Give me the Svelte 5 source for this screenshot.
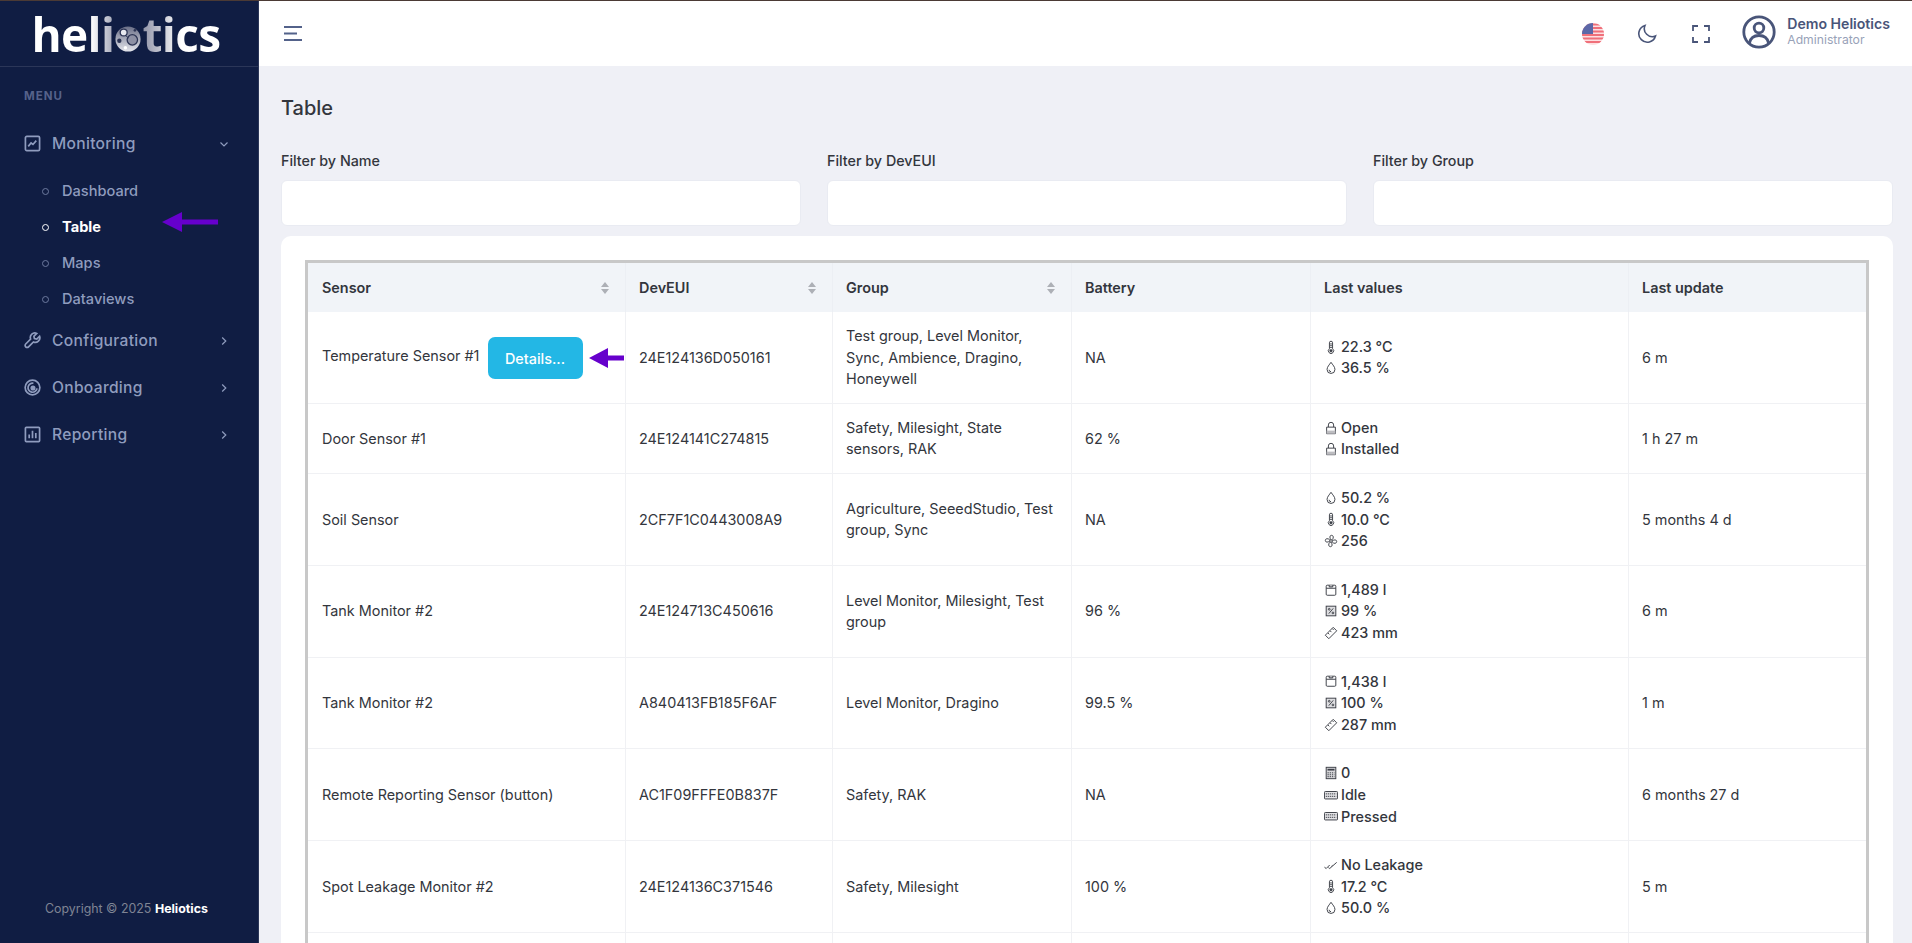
<script>
  const rows = [
    { name: 'Temperature Sensor #1', details: true, eui: '24E124136D050161', group: 'Test group, Level Monitor, Sync, Ambience, Dragino, Honeywell', battery: 'NA', values: [['therm', '22.3 °C'], ['drop', '36.5 %']], update: '6 m' },
    { name: 'Door Sensor #1', eui: '24E124141C274815', group: 'Safety, Milesight, State sensors, RAK', battery: '62 %', values: [['lock', 'Open'], ['lock', 'Installed']], update: '1 h 27 m' },
    { name: 'Soil Sensor', eui: '2CF7F1C0443008A9', group: 'Agriculture, SeeedStudio, Test group, Sync', battery: 'NA', values: [['drop', '50.2 %'], ['therm', '10.0 °C'], ['fan', '256']], update: '5 months 4 d' },
    { name: 'Tank Monitor #2', eui: '24E124713C450616', group: 'Level Monitor, Milesight, Test group', battery: '96 %', values: [['tank', '1,489 l'], ['pct', '99 %'], ['ruler', '423 mm']], update: '6 m' },
    { name: 'Tank Monitor #2', eui: 'A840413FB185F6AF', group: 'Level Monitor, Dragino', battery: '99.5 %', values: [['tank', '1,438 l'], ['pct', '100 %'], ['ruler', '287 mm']], update: '1 m' },
    { name: 'Remote Reporting Sensor (button)', eui: 'AC1F09FFFE0B837F', group: 'Safety, RAK', battery: 'NA', values: [['calc', '0'], ['keys', 'Idle'], ['keys', 'Pressed']], update: '6 months 27 d' },
    { name: 'Spot Leakage Monitor #2', eui: '24E124136C371546', group: 'Safety, Milesight', battery: '100 %', values: [['check', 'No Leakage'], ['therm', '17.2 °C'], ['drop', '50.0 %']], update: '5 m' }
  ];
  const subs = ['Dashboard', 'Table', 'Maps', 'Dataviews'];
</script>

{#snippet vicon(n)}
  <svg class="vi" viewBox="0 0 16 16" fill="none" stroke="#3c3f47" stroke-width="1.1">
    {#if n === 'therm'}
      <path d="M6.200 10V3.200a1.800 1.800 0 0 1 3.600 0V10a3 3 0 1 1-3.600 0z" /><circle cx="8" cy="12.300" r="1.300" fill="#3c3f47" /><path d="M7 4.500h2M7 6.500h2M7 8.500h2" />
    {:else if n === 'drop'}
      <path d="M8 1.500c2 3 4.500 5.200 4.500 8.200a4.500 4.500 0 0 1-9 0C3.500 6.700 6 4.500 8 1.500z" /><path d="M5.800 10a2.200 2.200 0 0 0 2.200 2.200" />
    {:else if n === 'lock'}
      <path d="M5 7V4.500a3 3 0 0 1 6 0V7" /><path d="M3 7h10v7.500H3z" fill="#fff" /><rect x="3" y="11" width="10" height="3.500" fill="#bdbdc1" stroke="none" />
    {:else if n === 'fan'}
      <circle cx="8" cy="8" r="1.500" /><path d="M8 6.500C6 4.500 6.500 1.500 8.500 1.500c2.500 0 2.800 2.800 1 5M9.500 8c2-2 5-1.500 5 .5 0 2.500-2.800 2.800-5 1M8 9.500c2 2 1.500 5-.5 5-2.500 0-2.800-2.800-1-5M6.500 8c-2 2-5 1.500-5-.5C1.500 5 4.300 4.700 6.500 6.500" />
    {:else if n === 'tank'}
      <rect x="2.500" y="2.500" width="11" height="11.500" rx="1.200" /><path d="M2.500 6h11" /><path d="M6 2.500v2h4v-2" fill="#bdbdc1" />
    {:else if n === 'pct'}
      <rect x="2.500" y="2.500" width="11" height="11" fill="#dedee1" /><path d="M10.500 5l-5 6" /><circle cx="6" cy="6" r="1" /><circle cx="10.200" cy="10.200" r="1" />
    {:else if n === 'ruler'}
      <path d="M1.500 10.500l9-9 4 4-9 9zM4.500 8l1.500 1.500M7 5.500L8.500 7M9.500 3l1.500 1.500" />
    {:else if n === 'calc'}
      <rect x="2.500" y="1.500" width="11" height="13" fill="#d8d8db" /><path d="M4 4.200h8" stroke-width="2" /><path d="M4 7.800h8M4 10h8M4 12.200h8" stroke-dasharray="1.500 1" />
    {:else if n === 'keys'}
      <rect x="0.500" y="4" width="15" height="8.500" rx="1" fill="#e4e4e7" /><path d="M2 6.700h12M2 9.500h12" stroke-dasharray="1.500 .8" />
    {:else}
      <path d="M.5 10.500l2 1.500 4-4M5 11l1.500 1 8-7M8.500 9.500l1.200-1" />
    {/if}
  </svg>
{/snippet}

{#snippet sort()}
  <svg class="sort" viewBox="0 0 8 12" fill="#adb0b6"><path d="M4 0l4 5H0zM4 12L0 7h8z" /></svg>
{/snippet}

{#snippet chevron(down)}
  <svg class="chev" viewBox="0 0 10 10" fill="none" stroke="#8f9cbe" stroke-width="1.200">
    {#if down}<path d="M1.500 3.500L5 7l3.500-3.500" />{:else}<path d="M3.200 1.500L6.800 5 3.200 8.500" />{/if}
  </svg>
{/snippet}

<div class="app">
  <aside class="side">
    <div class="brand">
      <span class="logo"><span class="l1">heli</span><svg class="planet" viewBox="0 0 30 30">
        <defs><linearGradient id="pg" x1="0" y1="0" x2="0" y2="1"><stop offset="0" stop-color="#6b7088" /><stop offset="1" stop-color="#e4e5ec" /></linearGradient></defs>
        <circle cx="15" cy="15" r="14.500" fill="url(#pg)" /><circle cx="20" cy="16" r="6" fill="#8d90a4" stroke="#2c3454" stroke-width="1.500" /><circle cx="10" cy="7.500" r="4" fill="#e8e9ef" stroke="#2c3454" stroke-width="1.500" /><circle cx="5" cy="17" r="2.500" fill="#2c3454" /><circle cx="12" cy="25" r="2" fill="#fff" /><circle cx="23" cy="5" r="1.500" fill="#2c3454" /><path d="M12 11l4 3" stroke="#2c3454" />
      </svg><span class="l2">tics</span></span>
    </div>
    <nav class="nav">
      <div class="cap">MENU</div>
      <div class="item first">
        <svg class="ni" viewBox="0 0 18 18" fill="none" stroke="#8f9cbe" stroke-width="1.800"><rect x="1.500" y="1.500" width="15" height="15" rx="1.500" /><path d="M4.500 12l3-3.500 2 1.500 3.500-4" /></svg>
        <span>Monitoring</span>{@render chevron(true)}
      </div>
      <ul class="subs">
        {#each subs as s}
          <li class:on={s === 'Table'}><i></i>{s}</li>
        {/each}
      </ul>
      <div class="item">
        <svg class="ni" viewBox="0 0 18 18" fill="none" stroke="#8f9cbe" stroke-width="1.800"><path d="M16.500 4.500l-3 3-2.500-.5-.5-2.500 3-3A4.800 4.800 0 0 0 7 7.500L1.800 12.700a2.100 2.100 0 0 0 3 3L10 10.500a4.800 4.800 0 0 0 6.500-6z" /></svg>
        <span>Configuration</span>{@render chevron(false)}
      </div>
      <div class="item">
        <svg class="ni" viewBox="0 0 18 18" fill="none" stroke="#8f9cbe" stroke-width="1.800"><circle cx="9" cy="9" r="7.800" /><path d="M10 4.500a4.800 4.800 0 1 0 3.800 5.500" /><circle cx="9.500" cy="9.500" r="1.800" fill="#8f9cbe" /></svg>
        <span>Onboarding</span>{@render chevron(false)}
      </div>
      <div class="item">
        <svg class="ni" viewBox="0 0 18 18" fill="none" stroke="#8f9cbe" stroke-width="1.800"><rect x="1.500" y="1.500" width="15" height="15" rx="1" /><path d="M5.500 13V9M9 13V5M12.500 13V7.500" /></svg>
        <span>Reporting</span>{@render chevron(false)}
      </div>
    </nav>
    <div class="copy">Copyright © 2025 <b>Heliotics</b></div>
    <svg class="arrow a1" viewBox="0 0 56 20" fill="#6600cc"><path d="M0 10L20 0v7.500h36v5H20V20z" /></svg>
  </aside>

  <div class="main">
    <header class="top">
      <svg class="burger" viewBox="0 0 18 15" fill="none" stroke="#53628a" stroke-width="2"><path d="M0 1h18M0 7.500h13M0 14h18" /></svg>
      <div class="tools">
        <svg class="flag" viewBox="0 0 22 22">
          <defs><clipPath id="fc"><circle cx="11" cy="11" r="11" /></clipPath></defs>
          <g clip-path="url(#fc)">
            <rect width="22" height="22" fill="#fde0e2" />
            <path d="M0 1.500h22M0 5h22M0 8.500h22M0 12h22M0 15.500h22M0 19h22" stroke="#f0707a" stroke-width="1.800" />
            <rect width="11" height="11" fill="#5c68a8" />
          </g>
        </svg>
        <svg class="moon" viewBox="0 0 20 20" fill="none" stroke="#495579" stroke-width="1.600"><path d="M8 1.500a8.500 8.500 0 1 0 10.500 10.500A8 8 0 0 1 8 1.500z" /></svg>
        <svg class="full" viewBox="0 0 18 18" fill="none" stroke="#495579" stroke-width="1.800"><path d="M1 6V1h5M12 1h5v5M17 12v5h-5M6 17H1v-5" /></svg>
        <div class="user">
          <svg class="avatar" viewBox="0 0 34 34" fill="none" stroke="#495579" stroke-width="2.800"><circle cx="17" cy="17" r="15.200" /><circle cx="17" cy="13" r="4.800" /><path d="M7.500 28c1-5 5-7.500 9.500-7.500s8.500 2.500 9.500 7.500" /></svg>
          <div class="who"><strong>Demo Heliotics</strong><small>Administrator</small></div>
        </div>
      </div>
    </header>

    <main class="content">
      <h1>Table</h1>
      <div class="filters">
        <label>Filter by Name<input type="text" /></label>
        <label>Filter by DevEUI<input type="text" /></label>
        <label>Filter by Group<input type="text" /></label>
      </div>
      <section class="card">
        <table>
          <colgroup>
            <col class="c1" /><col class="c2" /><col class="c3" /><col class="c4" /><col class="c5" /><col />
          </colgroup>
          <thead>
            <tr>
              <th><div class="th">Sensor{@render sort()}</div></th>
              <th><div class="th">DevEUI{@render sort()}</div></th>
              <th><div class="th">Group{@render sort()}</div></th>
              <th>Battery</th>
              <th>Last values</th>
              <th>Last update</th>
            </tr>
          </thead>
          <tbody>
            {#each rows as r}
              <tr>
                <td>
                  {r.name}
                  {#if r.details}
                    <span class="det">
                      <button>Details...</button>
                      <svg class="arrow a2" viewBox="0 0 35 20" fill="#6600cc"><path d="M0 10L19 0v7.500h16v5H19V20z" /></svg>
                    </span>
                  {/if}
                </td>
                <td>{r.eui}</td>
                <td>{r.group}</td>
                <td>{r.battery}</td>
                <td>
                  {#each r.values as v}
                    <div class="val">{@render vicon(v[0])}<span>{v[1]}</span></div>
                  {/each}
                </td>
                <td>{r.update}</td>
              </tr>
            {/each}
            <tr class="blank"><td></td><td></td><td></td><td></td><td></td><td></td></tr>
          </tbody>
        </table>
      </section>
    </main>
  </div>
</div>

<style>
  :global(body) { margin: 0; background: #eff0f6; }
  .app {
    display: grid; grid-template-columns: 259px 1fr; grid-template-rows: minmax(0, 1fr); height: 943px; overflow: hidden;
    font-family: Inter, "Liberation Sans", sans-serif; color: #33363d; font-size: 14.4px;
    border-top: 1px solid #4b3a35; box-sizing: border-box;
  }
  .side {
    position: relative; background: #101d43; border-right: 1px solid #2b3658;
    display: flex; flex-direction: column; box-sizing: border-box; min-height: 0;
    color: #8f9cbe; overflow: hidden;
  }
  .brand { height: 65px; border-bottom: 1px solid #2b3658; display: flex; justify-content: center; align-items: center; flex: none; }
  .logo { display: flex; align-items: center; font: 700 46px/1 "Open Sans", sans-serif; color: #fff; letter-spacing: -.6px; margin-left: -6px; }
  .l1 { background: linear-gradient(90deg, #fff 72%, #a4a7b8 100%); -webkit-background-clip: text; background-clip: text; color: transparent; }
  .l2 { background: linear-gradient(90deg, #8e91a6 0%, #fff 50%); -webkit-background-clip: text; background-clip: text; color: transparent; }
  .planet { width: 26px; height: 26px; margin: 10px 1px 0 1px; }
  .nav { flex: 1; padding-top: 21px; }
  .cap { padding-left: 24px; font-size: 11.5px; font-weight: 700; letter-spacing: 1px; color: #56628a; line-height: 16px; margin-bottom: 16px; }
  .item { display: flex; align-items: center; height: 47px; padding-left: 24px; font-size: 15.6px; font-weight: 500; letter-spacing: .3px; }
  .item span { margin-left: 11px; flex: 1; }
  .ni { width: 17px; height: 17px; flex: none; }
  .chev { width: 10px; height: 10px; margin-right: 29px; flex: none; }
  .subs { list-style: none; margin: 0; padding: 6px 0 0 42px; }
  .subs li { height: 36px; display: flex; align-items: center; font-size: 14.6px; font-weight: 500; }
  .subs i { width: 5px; height: 5px; border: 1px solid #6d7a9f; border-radius: 50%; margin-right: 13px; box-sizing: content-box; }
  .subs li.on { color: #fff; font-weight: 700; }
  .subs li.on i { border-color: #fff; }
  .copy { padding: 0 0 25px 45px; font-size: 12.4px; color: #7f8494; line-height: 18px; flex: none; }
  .copy b { color: #fff; }
  .arrow { position: absolute; }
  .a1 { left: 162px; top: 211px; width: 56px; height: 20px; }
  .main { min-width: 0; min-height: 0; overflow: hidden; display: flex; flex-direction: column; }
  .top { height: 65px; background: #fff; display: flex; align-items: center; justify-content: space-between; padding: 0 22px 0 25px; flex: none; }
  .burger { width: 18px; height: 15px; }
  .tools { display: flex; align-items: center; }
  .flag { width: 22px; height: 22px; margin-right: 33px; }
  .moon { width: 20px; height: 20px; margin-right: 35px; }
  .full { width: 18px; height: 18px; margin-right: 32px; }
  .user { display: flex; align-items: center; gap: 11px; margin-bottom: 3px; }
  .avatar { width: 34px; height: 34px; margin-bottom: 1px; }
  .who { display: flex; flex-direction: column; line-height: 16px; }
  .who strong { font-size: 14.1px; font-weight: 600; color: #495579; }
  .who small { font-size: 12.2px; color: #98a2b8; }
  .content { padding: 0 19px 0 22px; }
  h1 { margin: 0; padding-top: 29px; font-size: 20px; font-weight: 500; line-height: 26px; color: #33363d; }
  .filters { display: grid; grid-template-columns: repeat(3, 1fr); gap: 26px; margin-top: 29px; }
  label { display: block; font-size: 14.3px; font-weight: 500; line-height: 21px; }
  input { display: block; width: 100%; height: 46px; box-sizing: border-box; margin-top: 9px; background: #fff; border: 1px solid #e9ebf2; border-radius: 6px; }
  .card { margin-top: 10px; background: #fff; border-radius: 10px; padding: 24px; height: 900px; box-sizing: border-box; }
  table { width: 100%; table-layout: fixed; border-collapse: separate; border-spacing: 0; border: 3px solid #c8c8c8; border-bottom: 0; font-size: 14.4px; line-height: 21.6px; }
  .c1 { width: 317px; }
  .c2 { width: 207px; }
  .c3 { width: 239px; }
  .c4 { width: 239px; }
  .c5 { width: 318px; }
  th { text-align: left; background: #f1f4f8; height: 49px; padding: 0 13px; font-weight: 600; box-sizing: border-box; border-left: 1px solid #eceff4; }
  th:first-child, td:first-child { border-left: 0; padding-left: 14px; }
  .th { display: flex; align-items: center; justify-content: space-between; }
  .sort { width: 8px; height: 12px; margin-right: 3px; }
  td { padding: 13px; vertical-align: middle; border-left: 1px solid #f0f1f4; border-bottom: 1px solid #f0f1f4; }
  .det { display: inline-block; position: relative; margin: 2px 0 0 4px; vertical-align: middle; }
  button { display: block; width: 95px; height: 42px; padding: 0; background: #23b7e5; color: #fff; border: 0; border-radius: 7px; font: 500 14.4px Inter, sans-serif; }
  .a2 { left: 101px; top: 11px; width: 35px; height: 20px; }
  .val { display: flex; align-items: center; font-weight: 500; }
  .vi { width: 14px; height: 14px; margin-right: 3px; flex: none; }
  .blank td { height: 80px; }
</style>
